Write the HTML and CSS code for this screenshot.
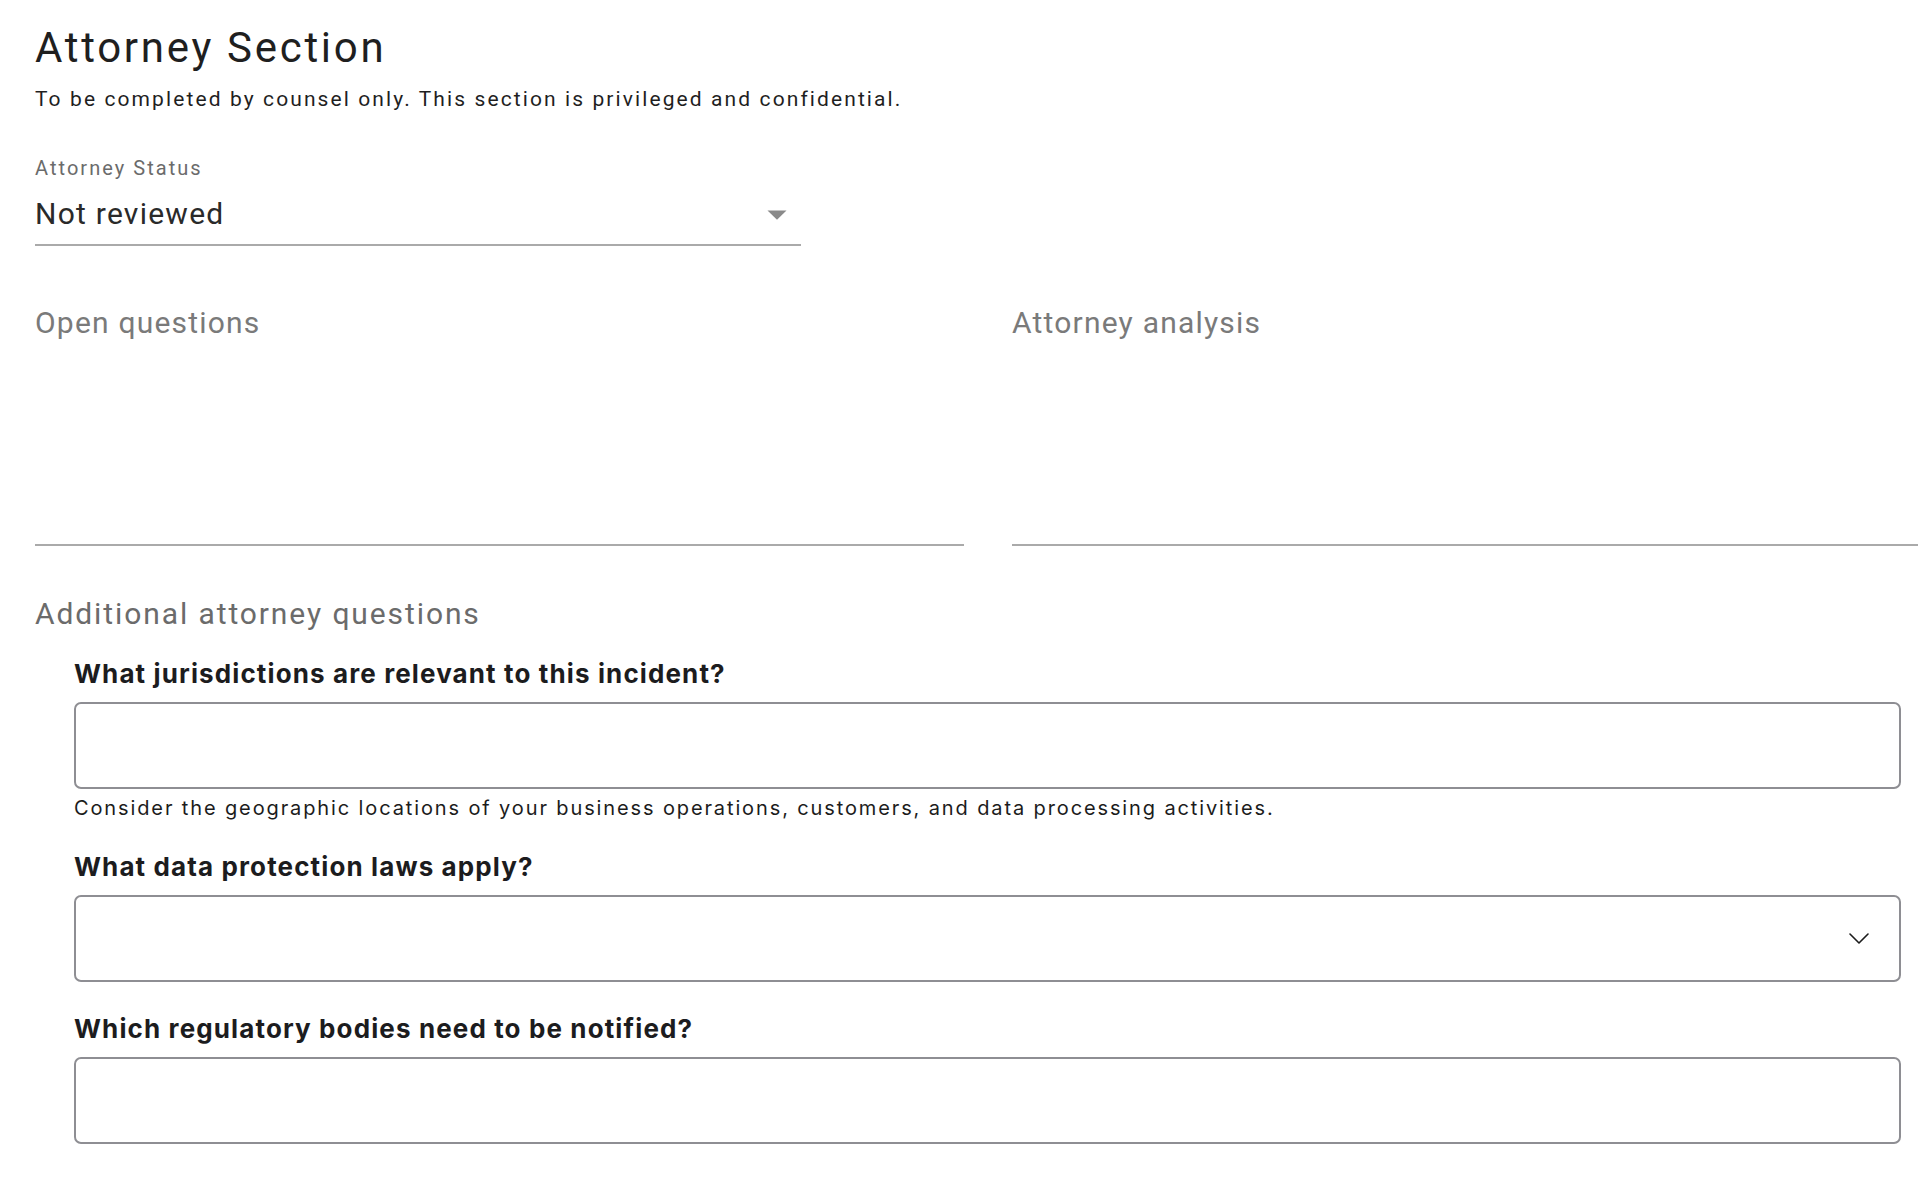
FILE: index.html
```html
<!DOCTYPE html>
<html lang="en">
<head>
<meta charset="utf-8">
<title>Attorney Section</title>
<link rel="stylesheet" href="styles.css">
</head>
<body>
<main class="page">
  <h1 class="title">Attorney Section</h1>
  <p class="subtitle">To be completed by counsel only. This section is privileged and confidential.</p>

  <div class="status-field">
    <label class="status-label">Attorney Status</label>
    <div class="status-select">
      <span class="status-value">Not reviewed</span>
      <svg class="drop-arrow" width="20" height="10" viewBox="0 0 20 10"><path d="M0.5 0.5 L19.5 0.5 L10 9.8 Z" fill="#8a8a8a"/></svg>
    </div>
  </div>

  <div class="notes-row">
    <div class="note-field"><span class="placeholder">Open questions</span></div>
    <div class="note-field"><span class="placeholder">Attorney analysis</span></div>
  </div>

  <h2 class="group-title">Additional attorney questions</h2>

  <div class="questions">
    <div class="question">
      <label class="q-label">What jurisdictions are relevant to this incident?</label>
      <div class="q-box"></div>
      <p class="q-help">Consider the geographic locations of your business operations, customers, and data processing activities.</p>
    </div>
    <div class="question">
      <label class="q-label">What data protection laws apply?</label>
      <div class="q-box q-select">
        <svg class="chevron" width="20" height="11" viewBox="0 0 20 11"><path d="M1 1 L10 10 L19 1" fill="none" stroke="#1c1c1c" stroke-width="1.6" stroke-linecap="round" stroke-linejoin="round"/></svg>
      </div>
    </div>
    <div class="question">
      <label class="q-label">Which regulatory bodies need to be notified?</label>
      <div class="q-box"></div>
    </div>
  </div>
</main>
</body>
</html>
```

FILE: styles.css
```css
html, body {
  margin: 0;
  padding: 0;
  background: #ffffff;
  overflow-x: hidden;
}

.page {
  padding: 24px 0 0 35px;
  font-family: Roboto, "Liberation Sans", sans-serif;
  color: #212121;
}

.title {
  margin: 0;
  font-size: 42px;
  font-weight: 400;
  line-height: 48px;
  letter-spacing: 2.7px;
  color: #1f1f1f;
}

.subtitle {
  margin: 13px 0 0;
  font-size: 21px;
  line-height: 28px;
  letter-spacing: 2.1px;
  color: #1f1f1f;
}

.status-field {
  margin-top: 41px;
  width: 766px;
  display: flex;
  flex-direction: column;
}

.status-label {
  font-size: 20px;
  line-height: 28px;
  letter-spacing: 2.04px;
  color: #6b6b6b;
}

.status-select {
  margin-top: 12px;
  display: flex;
  align-items: center;
  justify-content: space-between;
  padding-bottom: 10px;
  border-bottom: 2px solid #aaaaaa;
}

.status-value {
  font-size: 30px;
  line-height: 40px;
  letter-spacing: 1.25px;
  color: #2a2a2a;
}

.drop-arrow {
  margin-right: 14px;
  margin-top: 1px;
}

.notes-row {
  margin-top: 57px;
  display: grid;
  grid-template-columns: 929px 929px;
  column-gap: 48px;
}

.note-field {
  height: 241px;
  border-bottom: 2px solid #aaaaaa;
}

.placeholder {
  display: block;
  font-size: 30px;
  line-height: 40px;
  letter-spacing: 1.2px;
  color: #7a7a7a;
}

.group-title {
  margin: 48px 0 0;
  font-size: 30px;
  font-weight: 400;
  line-height: 40px;
  letter-spacing: 1.9px;
  color: #6b6b6b;
}

.questions {
  margin-top: 24px;
  margin-left: 39px;
  width: 1827px;
  font-family: Inter, "Noto Sans", sans-serif;
}

.question {
  display: flex;
  flex-direction: column;
  margin-bottom: 31px;
}

.q-label {
  font-size: 26px;
  font-weight: 700;
  line-height: 32px;
  letter-spacing: 1.12px;
  color: #1c1c1e;
}

.q-box {
  margin-top: 12px;
  height: 83px;
  border: 2px solid #8e8e93;
  border-radius: 7px;
  box-sizing: content-box;
}

.q-select {
  display: flex;
  align-items: center;
  justify-content: flex-end;
}

.chevron {
  margin-right: 30px;
}

.q-help {
  margin: 5px 0 -2px;
  font-size: 20px;
  line-height: 28px;
  letter-spacing: 1.88px;
  color: #1c1c1c;
}
```
